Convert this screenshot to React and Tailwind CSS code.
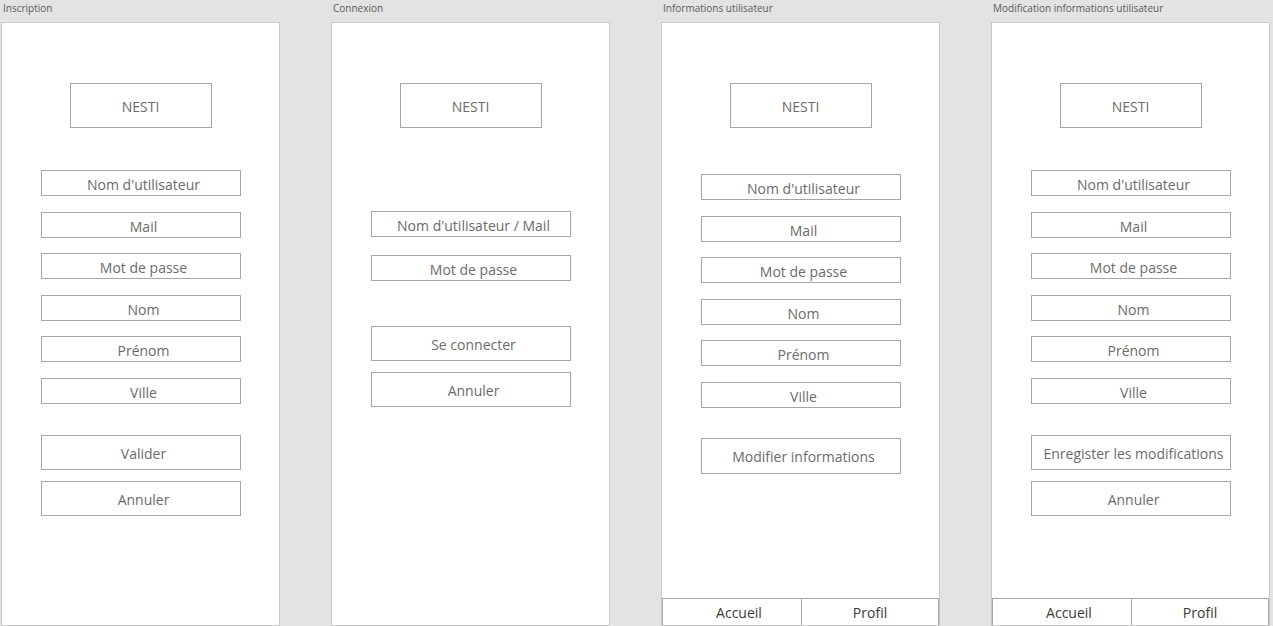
import React from 'react';

const font = { fontFamily: '"Open Sans", "Noto Sans", sans-serif' };

function Box({ children, className = '' }) {
  return (
    <div className={`w-[200px] flex items-center justify-center pl-[6px] border border-[#a6a6a6] bg-white text-[14px] text-[#6b6b6b] leading-none ${className}`}>
      {children}
    </div>
  );
}

function Logo() {
  return (
    <div className="w-[142px] h-[45px] mt-[60px] pt-[2px] flex items-center justify-center border border-[#a6a6a6] text-[14px] text-[#6b6b6b]">
      NESTI
    </div>
  );
}

function NavBar() {
  return (
    <div className="mt-auto flex w-full h-[27px] border-t border-[#a6a6a6] text-[14px] text-[#3a3a3a]">
      <div className="w-[140px] pl-[14px] flex items-center justify-center border-r border-[#a6a6a6] border-l border-l-[#a6a6a6]">Accueil</div>
      <div className="flex-1 flex items-center justify-center border-r border-[#a6a6a6]">Profil</div>
    </div>
  );
}

function Frame({ title, children }) {
  return (
    <div className="w-[279px] flex flex-col">
      <div className="h-[22px] pl-[2px] pt-[1px] text-[10px] leading-[14px] text-[#5a5a5a]">{title}</div>
      <div className="h-[604px] bg-white border border-[#cacaca] flex flex-col items-center">
        {children}
      </div>
    </div>
  );
}

const fields = ["Nom d'utilisateur", 'Mail', 'Mot de passe', 'Nom', 'Prénom', 'Ville'];

export default function App() {
  return (
    <div className="w-[1273px] h-[626px] overflow-hidden bg-[#e3e3e3] flex gap-[51px] pl-[1px]" style={font}>
      {/* Inscription */}
      <Frame title="Inscription">
        <Logo />
        <div className="mt-[42px] flex flex-col gap-[15.5px]">
          {fields.map((f) => (
            <Box key={f} className="h-[26px] pt-[4px]">{f}</Box>
          ))}
        </div>
        <Box className="h-[35px] mt-[31px] pt-[3px]">Valider</Box>
        <Box className="h-[35px] mt-[11px] pt-[3px]">Annuler</Box>
      </Frame>

      {/* Connexion */}
      <Frame title="Connexion">
        <Logo />
        <Box className="h-[26px] mt-[83px] pt-[4px]">Nom d'utilisateur / Mail</Box>
        <Box className="h-[26px] mt-[18px] pt-[4px]">Mot de passe</Box>
        <Box className="h-[35px] mt-[45px] pt-[3px]">Se connecter</Box>
        <Box className="h-[35px] mt-[11px] pt-[3px]">Annuler</Box>
      </Frame>

      {/* Informations utilisateur */}
      <Frame title="Informations utilisateur">
        <Logo />
        <div className="mt-[46px] flex flex-col gap-[15.6px]">
          {fields.map((f) => (
            <Box key={f} className="h-[26px] pt-[4px]">{f}</Box>
          ))}
        </div>
        <Box className="h-[36px] mt-[30px] pt-[3px]">Modifier informations</Box>
        <NavBar />
      </Frame>

      {/* Modification informations utilisateur */}
      <Frame title="Modification informations utilisateur">
        <Logo />
        <div className="mt-[42px] flex flex-col gap-[15.5px]">
          {fields.map((f) => (
            <Box key={f} className="h-[26px] pt-[4px]">{f}</Box>
          ))}
        </div>
        <Box className="h-[35px] mt-[31px] pt-[3px]">Enregister les modifications</Box>
        <Box className="h-[35px] mt-[11px] pt-[3px]">Annuler</Box>
        <NavBar />
      </Frame>
    </div>
  );
}
